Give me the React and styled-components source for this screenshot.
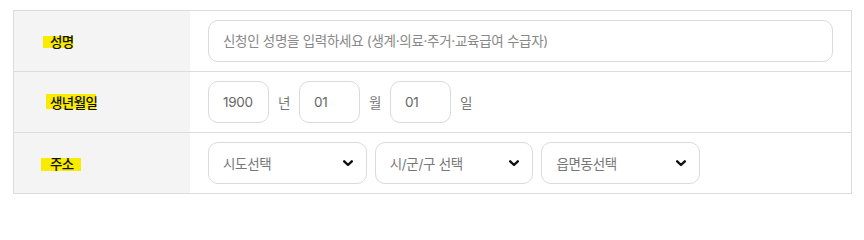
import React from "react";
import styled, { createGlobalStyle } from "styled-components";

const Global = createGlobalStyle`
  html, body { margin: 0; padding: 0; background: #fff; }
  body { font-family: Inter, "Noto Sans CJK KR", sans-serif; }
  * { box-sizing: border-box; }
`;

const Page = styled.div`
  padding: 10px 12px 0 13px;
`;

const Table = styled.div`
  width: 839px;
  border: 1px solid #dcdcdc;
  border-bottom: none;
`;

const Row = styled.div`
  display: grid;
  grid-template-columns: 176px 1fr;
  height: 61px;
  border-bottom: 1px solid #dcdcdc;
`;

const LabelCell = styled.div`
  background: #f4f4f4;
  display: flex;
  align-items: center;
  padding-left: 36px;
`;

const Label = styled.span`
  position: relative;
  isolation: isolate;
  font-family: "Noto Sans CJK KR", sans-serif;
  font-size: 13.5px;
  font-weight: 500;
  line-height: 20px;
  color: #111;
  letter-spacing: -0.6px;
  &::before {
    content: "";
    position: absolute;
    z-index: -1;
    left: ${(p) => p.$l}px;
    right: ${(p) => p.$r}px;
    top: ${(p) => p.$t}px;
    bottom: ${(p) => p.$b}px;
    background: #f9ec00;
  }
`;

const FieldCell = styled.div`
  display: flex;
  align-items: center;
  gap: ${(p) => p.$gap || 9}px;
  padding: 0 18px;
`;

const TextInput = styled.input`
  height: 42px;
  width: ${(p) => (p.$w ? `${p.$w}px` : "100%")};
  border: 1px solid #dadada;
  border-radius: 10px;
  padding: 0 14px;
  font-family: Inter, "Noto Sans CJK KR", sans-serif;
  font-size: 13.5px;
  letter-spacing: -0.3px;
  color: #666;
  background: #fff;
  outline: none;
  &::placeholder { color: #888; }
`;

const Unit = styled.span`
  font-size: 13.5px;
  color: #777;
  width: 12px;
`;

const Select = styled.div`
  height: 42px;
  width: 158.7px;
  border: 1px solid #dadada;
  border-radius: 10px;
  padding: 0 13px 0 14px;
  display: flex;
  align-items: center;
  justify-content: space-between;
  font-size: 13.5px;
  letter-spacing: -0.3px;
  color: #777;
  background: #fff;
`;

const Chevron = () => (
  <svg width="10" height="7" viewBox="0 0 10 7">
    <polyline points="1.2,1.3 5,5 8.8,1.3" fill="none" stroke="#111" strokeWidth="2.4" strokeLinecap="round" strokeLinejoin="round" />
  </svg>
);

export default function App() {
  return (
    <>
      <Global />
      <Page>
        <Table>
          <Row>
            <LabelCell>
              <Label $l={-7} $r={1} $t={4.5} $b={3.5}>성명</Label>
            </LabelCell>
            <FieldCell>
              <TextInput placeholder="신청인 성명을 입력하세요 (생계·의료·주거·교육급여 수급자)" />
            </FieldCell>
          </Row>
          <Row>
            <LabelCell>
              <Label $l={-4} $r={1} $t={1.5} $b={3.5}>생년월일</Label>
            </LabelCell>
            <FieldCell>
              <TextInput $w={61} defaultValue="1900" />
              <Unit>년</Unit>
              <TextInput $w={61} defaultValue="01" />
              <Unit>월</Unit>
              <TextInput $w={61} defaultValue="01" />
              <Unit>일</Unit>
            </FieldCell>
          </Row>
          <Row>
            <LabelCell>
              <Label $l={-9} $r={-7} $t={4.5} $b={2.5}>주소</Label>
            </LabelCell>
            <FieldCell $gap={8}>
              <Select>시도선택<Chevron /></Select>
              <Select>시/군/구 선택<Chevron /></Select>
              <Select>읍면동선택<Chevron /></Select>
            </FieldCell>
          </Row>
        </Table>
      </Page>
    </>
  );
}
